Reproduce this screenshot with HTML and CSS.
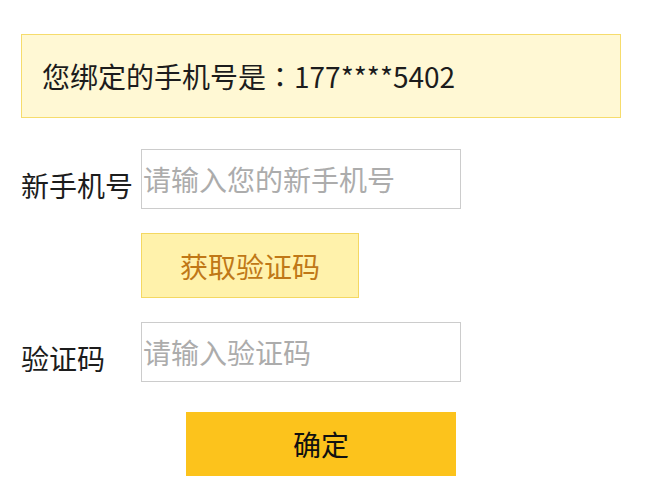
FILE: index.html
```html
<!DOCTYPE html>
<html lang="zh-CN">
<head>
    <meta charset="UTF-8">
    <meta name="viewport" content="width=device-width, initial-scale=1.0">
    <title>更换手机号</title>
    <link rel="stylesheet" href="styles.css">
</head>
<body>
    <div class="page">
        <div class="notice">您绑定的手机号是<span class="colon">：</span>177****5402</div>

        <form class="bind-form" onsubmit="return false">
            <div class="row">
                <label for="phone">新手机号</label>
                <input type="text" id="phone" placeholder="请输入您的新手机号">
            </div>
            <div class="row">
                <span class="spacer"></span>
                <button type="button" class="btn-code">获取验证码</button>
            </div>
            <div class="row">
                <label for="code">验证码</label>
                <input type="text" id="code" placeholder="请输入验证码">
            </div>
            <div class="actions">
                <button type="submit" class="btn-ok">确定</button>
            </div>
        </form>
    </div>
</body>
</html>
```

FILE: styles.css
```css
body {
    margin: 0;
    background: #fff;
    font-family: "Noto Sans CJK SC", sans-serif;
    color: #1c1c1c;
}
.page {
    width: 600px;
    padding: 34px 0 0 21px;
}
.notice {
    box-sizing: border-box;
    height: 84px;
    display: flex;
    align-items: center;
    padding: 0 20px;
    background-color: #fff8d4;
    border: 1px solid #f6dc6c;
    font-size: 28px;
}
.colon {
    font-family: "Noto Sans CJK TC", sans-serif;
}
.bind-form {
    margin-top: 31px;
}
.row {
    display: flex;
    align-items: center;
    margin-bottom: 24px;
}
label, .spacer {
    width: 120px;
    flex: none;
    font-size: 28px;
    padding-top: 12px;
}
input {
    box-sizing: border-box;
    width: 320px;
    height: 60px;
    padding: 0 1px;
    border: 1px solid #cccccc;
    font-family: inherit;
    font-size: 28px;
    color: #333;
    outline: none;
}
input::placeholder {
    color: #acacac;
}
button {
    font-family: inherit;
    font-size: 28px;
    cursor: pointer;
}
.btn-code {
    box-sizing: border-box;
    width: 218px;
    height: 65px;
    padding: 0;
    background-color: #fff2ab;
    border: 1px solid #f4d862;
    color: #c07817;
}
.actions {
    display: flex;
    justify-content: center;
    padding-top: 6px;
}
.btn-ok {
    width: 270px;
    height: 64px;
    padding: 0;
    border: none;
    background-color: #fcc31c;
    color: #111;
}
```
